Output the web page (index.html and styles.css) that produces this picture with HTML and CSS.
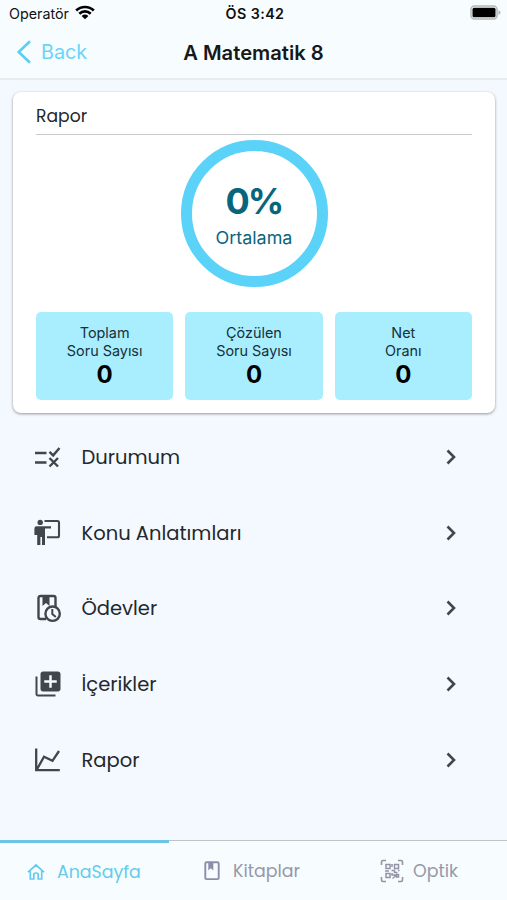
FILE: index.html
```html
<!DOCTYPE html>
<html lang="tr">
<head>
<meta charset="utf-8">
<title>A Matematik 8</title>
<link rel="stylesheet" href="styles.css">
</head>
<body>
<header class="top">
  <div class="status">
    <div class="carrier"><span>Operatör</span>
      <svg width="20" height="15" viewBox="0 0 20 15" fill="none" stroke="#000" stroke-width="2.7"><path d="M1.2 5.5C6 .8 14 .8 18.8 5.5M4.3 8.7c3.200-3 8.200-3 11.400 0"/><path d="M6.600 10.900q3.400-2.600 6.800 0L10 14.300z" fill="#000" stroke="none"/></svg>
    </div>
    <div class="clock">ÖS 3:42</div>
    <svg class="battery" width="31" height="16" viewBox="0 0 31 16"><rect x="1" y="1" width="26" height="13" rx="3.500" fill="#f7fcff" stroke="#b3b6b7" stroke-width="1.500"/><rect x="2.500" y="2.700" width="23" height="9.600" rx="1.500"/><path d="M28.500 5v5q2-1 2-2.500T28.500 5z" fill="#b3b6b7"/></svg>
  </div>
  <div class="nav">
    <div class="back"><svg width="15" height="24" viewBox="0 0 15 24" fill="none" stroke="#5ccef3" stroke-width="2.600"><path d="M14 1.200 2.700 12 14 22.800"/></svg><span>Back</span></div>
    <h1>A Matematik 8</h1>
  </div>
</header>
<main>
  <section class="card">
    <h2 class="geo">Rapor</h2>
    <div class="ring"><strong>0%</strong><span>Ortalama</span></div>
    <div class="stats">
      <div class="stat"><span>Toplam<br>Soru Sayısı</span><b>0</b></div>
      <div class="stat"><span>Çözülen<br>Soru Sayısı</span><b>0</b></div>
      <div class="stat"><span>Net<br>Oranı</span><b>0</b></div>
    </div>
  </section>
  <nav class="menu geo">
    <a class="row"><svg class="icon" viewBox="0 0 30 30" fill="none" stroke="#40464b" stroke-width="2.400"><path d="M2 11h11.500M2 20.500h11.500M16.500 9.800l3.700 3.600 6.300-7.400M16.500 16l8.500 8.500M25 16l-8.500 8.500"/></svg><span>Durumum</span><svg class="chev" viewBox="0 0 12 16"><path d="m2.500 1.500 6.500 6.500-6.500 6.500"/></svg></a>
    <a class="row"><svg class="icon" viewBox="0 0 30 30" fill="#40464b"><circle cx="7.200" cy="4.400" r="2.700"/><path d="M3.500 8.200H18v2.400h-6V27H9v-8H7.400v8H4.200V17H1.400v-6.400q0-2.400 2.100-2.400z"/><path d="M11.500 3h13q1.500 0 1.500 1.500v13.200q0 1.500-1.500 1.500H14" fill="none" stroke="#40464b" stroke-width="2.100"/></svg><span>Konu Anlatımları</span><svg class="chev" viewBox="0 0 12 16"><path d="m2.500 1.500 6.500 6.500-6.500 6.500"/></svg></a>
    <a class="row"><svg class="icon" viewBox="0 0 30 30" fill="none" stroke="#40464b" stroke-width="2.400"><path d="M13 26H7.500q-2 0-2-2V5q0-2 2-2h13q2 0 2 2v9"/><path d="M9.500 3h7v10l-3.500-3-3.500 3z" fill="#40464b" stroke="none"/><circle cx="19.600" cy="20.700" r="7.200"/><path d="M19.300 16V21l3.500 3" stroke-width="2"/></svg><span>Ödevler</span><svg class="chev" viewBox="0 0 12 16"><path d="m2.500 1.500 6.500 6.500-6.500 6.500"/></svg></a>
    <a class="row"><svg class="icon" viewBox="0 0 24 24" fill="#40464b"><path d="M3.600 6H2v14c0 1.100.9 2 2 2h14v-1.600H3.600V6zM20 2H8c-1.100 0-2 .9-2 2v12c0 1.100.9 2 2 2h12c1.100 0 2-.9 2-2V4c0-1.100-.9-2-2-2zm-1 9h-4v4h-2v-4H9V9h4V5h2v4h4v2z"/></svg><span>İçerikler</span><svg class="chev" viewBox="0 0 12 16"><path d="m2.500 1.500 6.500 6.500-6.500 6.500"/></svg></a>
    <a class="row"><svg class="icon" viewBox="0 0 30 30" fill="none" stroke="#40464b" stroke-width="2.300"><path d="M3.200 3.500v21.700h23.600M4 24.200l7-12.400 8.500 4L26 6"/></svg><span>Rapor</span><svg class="chev" viewBox="0 0 12 16"><path d="m2.500 1.500 6.500 6.500-6.500 6.500"/></svg></a>
  </nav>
</main>
<footer class="tabs geo">
  <a class="tab active"><svg width="18" height="18" viewBox="0 0 18 18" fill="none" stroke="#65cbed" stroke-width="1.700"><path d="M1 9.200 9 2l8 7.200M3.300 7.500V16h3.500v-4.500q0-1.500 2.200-1.500t2.200 1.500V16h3.500V7.500"/></svg><span>AnaSayfa</span></a>
  <a class="tab books"><svg width="16" height="20" viewBox="0 0 16 20" fill="none" stroke="#8d8da9" stroke-width="1.900"><rect x="1.300" y="1.300" width="13.400" height="16.800" rx="1.200"/><path d="M4.300 2h5v7.500L6.800 7.300 4.300 9.500z" fill="#8d8da9" stroke="none"/></svg><span>Kitaplar</span></a>
  <a class="tab optic"><svg width="24" height="24" viewBox="0 0 24 24" fill="none" stroke="#9293a5" stroke-width="1.600"><path d="M1.500 6V3q0-1.500 1.500-1.500h3M18 1.500H21q1.500 0 1.500 1.500v3M22.500 18V21q0 1.500-1.500 1.500h-3M6 22.500H3q-1.500 0-1.500-1.500v-3"/><path d="M6 5.500h4v4H6zM14.500 5.500h4v4h-4zM6 14.500h4v4H6zM12 5v3M11.500 11.500h3v2h3M5 12h4M18 11.500h1.500M12 14v2h3v2M12.500 19.500l2-1.500M16.500 15.500h2v2.500h-2z" stroke-width="1.500"/></svg><span>Optik</span></a>
</footer>
</body>
</html>
```
FILE: styles.css
```css
* { box-sizing: border-box; }
body {
  margin: 0;
  height: 900px;
  display: flex;
  flex-direction: column;
  overflow: hidden;
  background: #f4f9ff;
  color: #24282b;
  font-family: Inter, "Liberation Sans", sans-serif;
}
.geo { font-family: Poppins, Inter, sans-serif; font-feature-settings: "cv11"; }
svg { display: block; flex: none; }
.top { height: 80px; background: #f7fdff; border-bottom: 2px solid #e8edf2; }
.status {
  height: 27px;
  display: grid;
  grid-template-columns: 1fr auto 1fr;
  align-items: center;
  padding: 0 6px 0 9px;
  font-size: 14.3px;
  color: #111;
}
.carrier { display: flex; align-items: center; gap: 6px; }
.carrier svg { margin-top: -3px; }
.clock { font-weight: 600; letter-spacing: 0.4px; }
.battery { justify-self: end; margin-top: -1px; }
.nav {
  height: 50px;
  display: grid;
  grid-template-columns: 1fr auto 1fr;
  align-items: center;
  padding: 0 16px;
}
.back { display: flex; align-items: center; gap: 10px; color: #6bd5f7; font-size: 19.8px; }
h1 { margin: 0; font-size: 20.2px; font-weight: 600; color: #15191c; }
.card {
  height: 321px;
  margin: 12px 12px 0 13px;
  padding: 10px 23px 0;
  background: #fff;
  border-radius: 8px;
  box-shadow: 0 1px 3px rgba(0, 0, 0, 0.4);
}
h2 {
  margin: 0;
  height: 33px;
  line-height: 29px;
  font-size: 17.2px;
  font-weight: 400;
  border-bottom: 1px solid #c9cbcc;
}
.ring {
  width: 147px;
  height: 147px;
  margin: 5px auto 25px;
  border: 11px solid #5bd2f8;
  border-radius: 50%;
  display: flex;
  flex-direction: column;
  align-items: center;
  color: #08657e;
}
.ring strong { margin-top: 28px; font-size: 36px; line-height: 44px; font-weight: 700; letter-spacing: -1.8px; }
.ring span { margin-top: 4px; font-size: 17.9px; line-height: 22px; }
.stats { display: grid; grid-template-columns: repeat(3, 1fr); gap: 12px; }
.stat {
  height: 88px;
  padding-top: 12px;
  display: flex;
  flex-direction: column;
  align-items: center;
  text-align: center;
  border-radius: 5px;
  background: #a8eeff;
}
.stat span { font-size: 14.4px; line-height: 17.5px; color: #173039; }
.stat b { margin-top: 2px; font-size: 24px; line-height: 28px; font-weight: 700; color: #000; }
.menu { margin-top: 6px; }
.row { display: flex; align-items: center; height: 75.75px; padding: 0 50px 0 33px; font-size: 19.5px; }
.row span { padding-top: 1px; }
.icon { width: 30px; height: 30px; margin: 0 19px 0 -0.5px; }
.chev { width: 12px; height: 16px; margin-left: auto; fill: none; stroke: #40464b; stroke-width: 2.6; }
.tabs {
  margin-top: auto;
  height: 60px;
  display: grid;
  grid-template-columns: repeat(3, 1fr);
  background: #f7fdff;
  font-size: 17.4px;
  color: #9698aa;
}
.tab { display: flex; align-items: center; border-top: 1px solid #bdc5cb; padding-top: 1px; }
.active { color: #65cbed; border-top: 3px solid #6bc5e6; padding: 0 0 0 27px; gap: 12px; }
.books { padding-left: 35px; gap: 13px; }
.optic { padding-left: 42px; gap: 9px; }
.optic svg { margin-top: -1px; }
```
